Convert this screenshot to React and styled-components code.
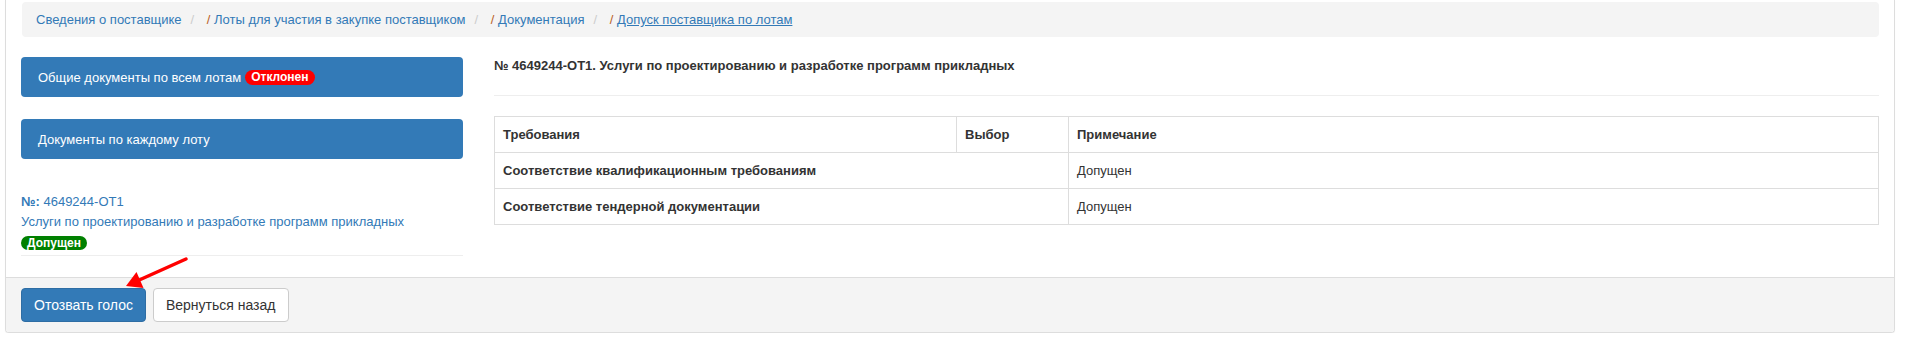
import React from "react";
import styled, { createGlobalStyle } from "styled-components";

const GlobalStyle = createGlobalStyle`
  body {
    margin: 0;
    background: #fff;
    font-family: "Liberation Sans", Arial, sans-serif;
    font-size: 13px;
    color: #333;
  }
`;

const crumbs = [
  { title: "Сведения о поставщике" },
  { title: "Лоты для участия в закупке поставщиком", slash: true },
  { title: "Документация", slash: true },
  { title: "Допуск поставщика по лотам", slash: true, active: true },
];

const requirements = [
  { name: "Соответствие квалификационным требованиям", note: "Допущен" },
  { name: "Соответствие тендерной документации", note: "Допущен" },
];

export default function App() {
  return (
    <Page>
      <GlobalStyle />
      <Panel>
        <PanelBody>
          <Breadcrumb>
            {crumbs.map((c, i) => (
              <Crumb key={c.title} $first={i === 0}>
                {c.slash && <Slash>/ </Slash>}
                <CrumbLink $active={c.active}>{c.title}</CrumbLink>
              </Crumb>
            ))}
          </Breadcrumb>

          <Columns>
            <Side>
              <SideButton>
                Общие документы по всем лотам
                <Badge $color="#ff0000">Отклонен</Badge>
              </SideButton>
              <SideButton>Документы по каждому лоту</SideButton>

              <LotInfo>
                <div>
                  <b>№:</b> 4649244-ОТ1
                </div>
                <div>Услуги по проектированию и разработке программ прикладных</div>
                <div>
                  <Badge $color="#008000" $flat>
                    Допущен
                  </Badge>
                </div>
              </LotInfo>
              <Divider $top={3} />
            </Side>

            <Main>
              <LotTitle>
                № 4649244-ОТ1. Услуги по проектированию и разработке программ прикладных
              </LotTitle>
              <Divider $top={20} />
              <Table>
                <colgroup>
                  <col style={{ width: 462 }} />
                  <col style={{ width: 112 }} />
                  <col />
                </colgroup>
                <thead>
                  <tr>
                    <Th>Требования</Th>
                    <Th>Выбор</Th>
                    <Th>Примечание</Th>
                  </tr>
                </thead>
                <tbody>
                  {requirements.map((r) => (
                    <tr key={r.name}>
                      <Th colSpan={2}>{r.name}</Th>
                      <Td>{r.note}</Td>
                    </tr>
                  ))}
                </tbody>
              </Table>
            </Main>
          </Columns>
        </PanelBody>

        <Footer>
          <Button $primary>Отозвать голос</Button>
          <Button>Вернуться назад</Button>
        </Footer>

        <Arrow viewBox="0 0 90 45" width="90" height="45">
          <line x1="70" y1="9" x2="21" y2="31" stroke="#f00" strokeWidth="3.5" strokeLinecap="round" />
          <polygon points="10,36 27.5,38 20.5,22" fill="#f00" />
        </Arrow>
      </Panel>
    </Page>
  );
}

const Page = styled.div`
  padding: 0 12px 0 5px;
`;

const Panel = styled.div`
  position: relative;
  border: 1px solid #ddd;
  border-top: none;
  border-radius: 0 0 4px 4px;
  box-shadow: 0 1px 1px rgba(0, 0, 0, 0.05);
`;

const PanelBody = styled.div`
  padding: 2px 15px 21px 15px;
`;

const Breadcrumb = styled.ol`
  display: flex;
  list-style: none;
  margin: 0 0 0 1px;
  padding: 8px 14px;
  height: 19px;
  line-height: 19px;
  background: #f4f4f4;
  border-radius: 4px;
`;

const Crumb = styled.li`
  &::before {
    content: ${(p) => (p.$first ? "none" : '"/\\00a0"')};
    padding: 0 9px;
    color: #ccc;
  }
`;

const Slash = styled.span`
  color: #b8601f;
  white-space: pre;
`;

const CrumbLink = styled.a`
  color: #337ab7;
  text-decoration: ${(p) => (p.$active ? "underline" : "none")};
  cursor: pointer;
`;

const Columns = styled.div`
  display: grid;
  grid-template-columns: 442px 1fr;
  column-gap: 31px;
`;

const Side = styled.div`
  padding-top: 20px;
`;

const SideButton = styled.div`
  display: flex;
  align-items: center;
  gap: 4px;
  height: 40px;
  padding: 0 17px;
  margin-bottom: 22px;
  background: #337ab7;
  border-radius: 4px;
  color: #fff;
  font-size: 13px;
`;

const Badge = styled.span`
  display: inline-block;
  padding: 0 6px;
  height: ${(p) => (p.$flat ? "14px" : "15px")};
  line-height: ${(p) => (p.$flat ? "14px" : "15px")};
  background: ${(p) => p.$color};
  color: #fff;
  font-weight: bold;
  font-size: 12px;
  border-radius: 8px;
  vertical-align: middle;
`;

const LotInfo = styled.div`
  margin-top: 33px;
  line-height: 20px;
  color: #337ab7;

  b {
    font-weight: bold;
  }
`;

const Divider = styled.hr`
  margin: ${(p) => p.$top}px 0 0;
  border: none;
  border-top: 1px solid #eee;
`;

const Main = styled.div`
  padding-top: 20px;
`;

const LotTitle = styled.div`
  font-weight: bold;
  line-height: 18px;
`;

const Table = styled.table`
  width: 100%;
  margin-top: 20px;
  border-collapse: collapse;
  table-layout: fixed;
`;

const Th = styled.th`
  text-align: left;
  padding: 8px;
  line-height: 19px;
  border: 1px solid #ddd;
  font-weight: bold;
`;

const Td = styled.td`
  padding: 8px;
  line-height: 19px;
  border: 1px solid #ddd;
`;

const Footer = styled.div`
  display: flex;
  gap: 7px;
  padding: 10px 15px;
  background: #f4f4f4;
  border-top: 1px solid #ddd;
  border-radius: 0 0 3px 3px;
`;

const Button = styled.button`
  padding: 6px 12px;
  font-family: inherit;
  font-size: 14px;
  line-height: 20px;
  border-radius: 4px;
  border: 1px solid ${(p) => (p.$primary ? "#2e6da4" : "#ccc")};
  background: ${(p) => (p.$primary ? "#337ab7" : "#fff")};
  color: ${(p) => (p.$primary ? "#fff" : "#333")};
  cursor: pointer;
`;

const Arrow = styled.svg`
  position: absolute;
  left: 110px;
  top: 250px;
  pointer-events: none;
`;
